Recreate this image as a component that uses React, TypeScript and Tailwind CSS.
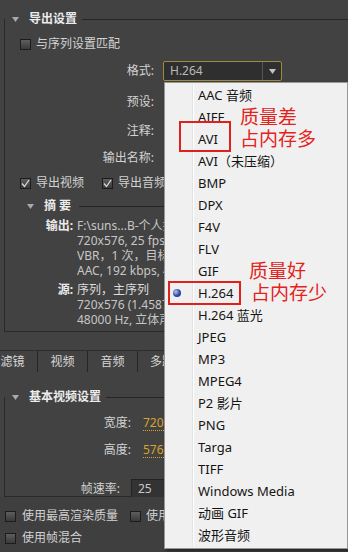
import React from "react";

const menuItems = [
  "AAC 音频",
  "AIFF",
  "AVI",
  "AVI（未压缩）",
  "BMP",
  "DPX",
  "F4V",
  "FLV",
  "GIF",
  "H.264",
  "H.264 蓝光",
  "JPEG",
  "MP3",
  "MPEG4",
  "P2 影片",
  "PNG",
  "Targa",
  "TIFF",
  "Windows Media",
  "动画 GIF",
  "波形音频",
];

function Arrow() {
  return (
    <svg width="7" height="5" viewBox="0 0 7 5" className="shrink-0">
      <path d="M0 0 H7 L3.5 5 Z" fill="#a9a9a9" />
    </svg>
  );
}

function Checkbox({ checked = false }: { checked?: boolean }) {
  return (
    <span className="flex h-[11px] w-[11px] shrink-0 items-center justify-center border border-[#1c1c1c] bg-gradient-to-b from-[#5e5e5e] to-[#3a3a3a]">
      {checked && (
        <svg width="9" height="9" viewBox="0 0 9 9">
          <path d="M1 4.5 L3.5 7.5 L8 1" fill="none" stroke="#d8d8d8" strokeWidth="1.3" />
        </svg>
      )}
    </span>
  );
}

function SectionHeader({ title }: { title: string }) {
  return (
    <div className="-ml-[5px] -mt-[9px] flex h-[18px] items-center pl-[12px]">
      <Arrow />
      <span className="ml-[10px] font-bold text-[#ececec]">{title}</span>
      <span className="ml-[5px] h-px flex-1 bg-[#262626]" />
    </div>
  );
}

function Label({ width, children }: { width: string; children: React.ReactNode }) {
  return <span className={`${width} shrink-0 text-right`}>{children}</span>;
}

export default function App() {
  return (
    <div className="relative h-[552px] w-[348px] overflow-hidden bg-[#424242] font-['Noto_Sans','Noto_Sans_CJK_SC',sans-serif] text-[12px] leading-[16px] text-[#d2d2d2]">
      {/* export settings */}
      <div className="ml-[4px] mt-[19px] flow-root h-[313px] border-b border-l border-[#2a2a2a]">
        <SectionHeader title="导出设置" />

        <div className="ml-[15px] mt-[8px] flex h-[16px] items-center">
          <Checkbox />
          <span className="ml-[5px]">与序列设置匹配</span>
        </div>

        <div className="mt-[9px] flex h-[20px] items-center">
          <Label width="w-[149px]">格式:</Label>
          <div className="ml-[9px] flex h-[20px] w-[119px] items-center rounded-[2px] border border-[#a08a3c] bg-[#2f2f2f]">
            <span className="flex-1 pl-[6px] text-[#b9b9b9]">H.264</span>
            <span className="flex h-full w-[19px] items-center justify-center border-l border-[#555]">
              <svg width="7" height="5" viewBox="0 0 7 5">
                <path d="M0 0 H7 L3.5 5 Z" fill="#c4c4c4" />
              </svg>
            </span>
          </div>
        </div>

        <div className="mt-[13px] flex h-[16px] items-center">
          <Label width="w-[149px]">预设:</Label>
        </div>
        <div className="mt-[13px] flex h-[16px] items-center">
          <Label width="w-[149px]">注释:</Label>
        </div>
        <div className="mt-[11px] flex h-[16px] items-center">
          <Label width="w-[149px]">输出名称:</Label>
        </div>

        <div className="ml-[15px] mt-[9px] flex h-[16px] items-center">
          <Checkbox checked />
          <span className="ml-[5px]">导出视频</span>
          <span className="ml-[18px]">
            <Checkbox checked />
          </span>
          <span className="ml-[5px]">导出音频</span>
        </div>

        {/* summary */}
        <div className="mt-[7px] flex h-[16px] items-center pl-[22px]">
          <Arrow />
          <span className="ml-[10px] font-bold text-[#ececec]">摘 要</span>
          <span className="ml-[8px] h-px flex-1 bg-[#262626]" />
        </div>

        <div className="mt-[4px] flex leading-[15px]">
          <Label width="w-[68px]">
            <span className="font-bold text-[#ececec]">输出:</span>
          </Label>
          <div className="ml-[4px] w-[87px] overflow-hidden whitespace-nowrap text-[#c6c6c6]">
            <div>F:\suns...B-个人技术\序列 01.mp4</div>
            <div>720x576, 25 fps, 逐行, 00:00:10:00</div>
            <div>VBR，1 次，目标 10.00 Mbps</div>
            <div>AAC, 192 kbps, 48 kHz, 立体声</div>
          </div>
        </div>

        <div className="mt-[4px] flex leading-[15px]">
          <Label width="w-[68px]">
            <span className="font-bold text-[#ececec]">源:</span>
          </Label>
          <div className="ml-[4px] w-[87px] overflow-hidden whitespace-nowrap">
            <div className="text-[#dcdcdc]">序列，主序列</div>
            <div className="text-[#c6c6c6]">720x576 (1.4587), 25 fps, 逐行</div>
            <div className="text-[#c6c6c6]">48000 Hz, 立体声</div>
          </div>
        </div>
      </div>

      {/* tabs */}
      <div className="-ml-[12px] mt-[18px] flex h-[22px] border-t border-[#2e2e2e] text-[#d8d8d8]">
        {["滤镜", "视频", "音频"].map((t) => (
          <div
            key={t}
            className="flex w-[50px] shrink-0 items-center justify-center border-r border-[#262626]"
          >
            {t}
          </div>
        ))}
        <div className="flex w-[26px] shrink-0 items-center overflow-hidden whitespace-nowrap pl-[12px]">
          多路复用器
        </div>
      </div>

      {/* basic video settings */}
      <div className="ml-[4px] mt-[25px] flow-root h-[100px] border-b border-l border-[#2a2a2a]">
        <SectionHeader title="基本视频设置" />

        <div className="mt-[9px] flex h-[16px] items-center">
          <Label width="w-[126px]">宽度:</Label>
          <span className="ml-[12px] border-b border-dotted border-[#d9a22b] leading-[14px] text-[#d9a22b]">720</span>
        </div>
        <div className="mt-[11px] flex h-[16px] items-center">
          <Label width="w-[126px]">高度:</Label>
          <span className="ml-[12px] border-b border-dotted border-[#d9a22b] leading-[14px] text-[#d9a22b]">576</span>
        </div>

        <div className="mt-[23px] flex h-[16px] items-end">
          <Label width="w-[115px]">帧速率:</Label>
          <span className="ml-[11px] flex h-[18px] w-[70px] items-center border-l border-r border-t border-[#222] bg-[#333] pl-[6px] text-[#c8c8c8]">
            25
          </span>
        </div>
      </div>

      {/* bottom options */}
      <div className="flow-root h-[55px] bg-[#3f3f3f]">
        <div className="mt-[11px] flex h-[16px] items-center pl-[5px]">
          <Checkbox />
          <span className="ml-[6px]">使用最高渲染质量</span>
          <span className="ml-[12px]">
            <Checkbox />
          </span>
          <span className="ml-[5px] whitespace-nowrap">使用最大位深度</span>
        </div>
        <div className="mt-[6px] flex h-[16px] items-center pl-[5px]">
          <Checkbox />
          <span className="ml-[6px]">使用帧混合</span>
        </div>
      </div>

      {/* format dropdown menu */}
      <div className="absolute left-[164px] top-[82px] h-[467px] w-[184px] border border-[#979797] bg-[#f0f0f0] shadow-[2px_2px_3px_rgba(0,0,0,0.45)]">
        <div className="absolute bottom-[2px] left-[27px] top-[2px] w-px bg-[#e2e3e3]" />
        <div className="absolute bottom-[2px] left-[28px] top-[2px] w-px bg-white" />
        <div className="relative pt-[1px]">
          {menuItems.map((item) => (
            <div key={item} className="relative flex h-[22px] items-center pl-[33px] text-[13px] text-[#141414]">
              {item === "H.264" && (
                <span className="absolute left-[8px] top-[7px] h-[8px] w-[8px] rounded-full bg-[radial-gradient(circle_at_35%_35%,#b9c4f0,#3247a6_55%,#1c2a6e)]" />
              )}
              {item}
            </div>
          ))}
        </div>
      </div>

      {/* annotations */}
      <div className="absolute left-[179px] top-[121px] h-[31px] w-[52px] border-2 border-[#e0201a]" />
      <div className="absolute left-[168px] top-[281px] h-[24px] w-[73px] border-2 border-[#e0201a]" />
      <div className="absolute left-[240px] top-[106px] text-[19px] leading-[22px] text-[#e4221b]">
        <div>质量差</div>
        <div>占内存多</div>
      </div>
      <div className="absolute left-[249px] top-[260px] text-[19px] leading-[22px] text-[#e4221b]">
        <div>质量好</div>
        <div className="ml-[2px]">占内存少</div>
      </div>
    </div>
  );
}
